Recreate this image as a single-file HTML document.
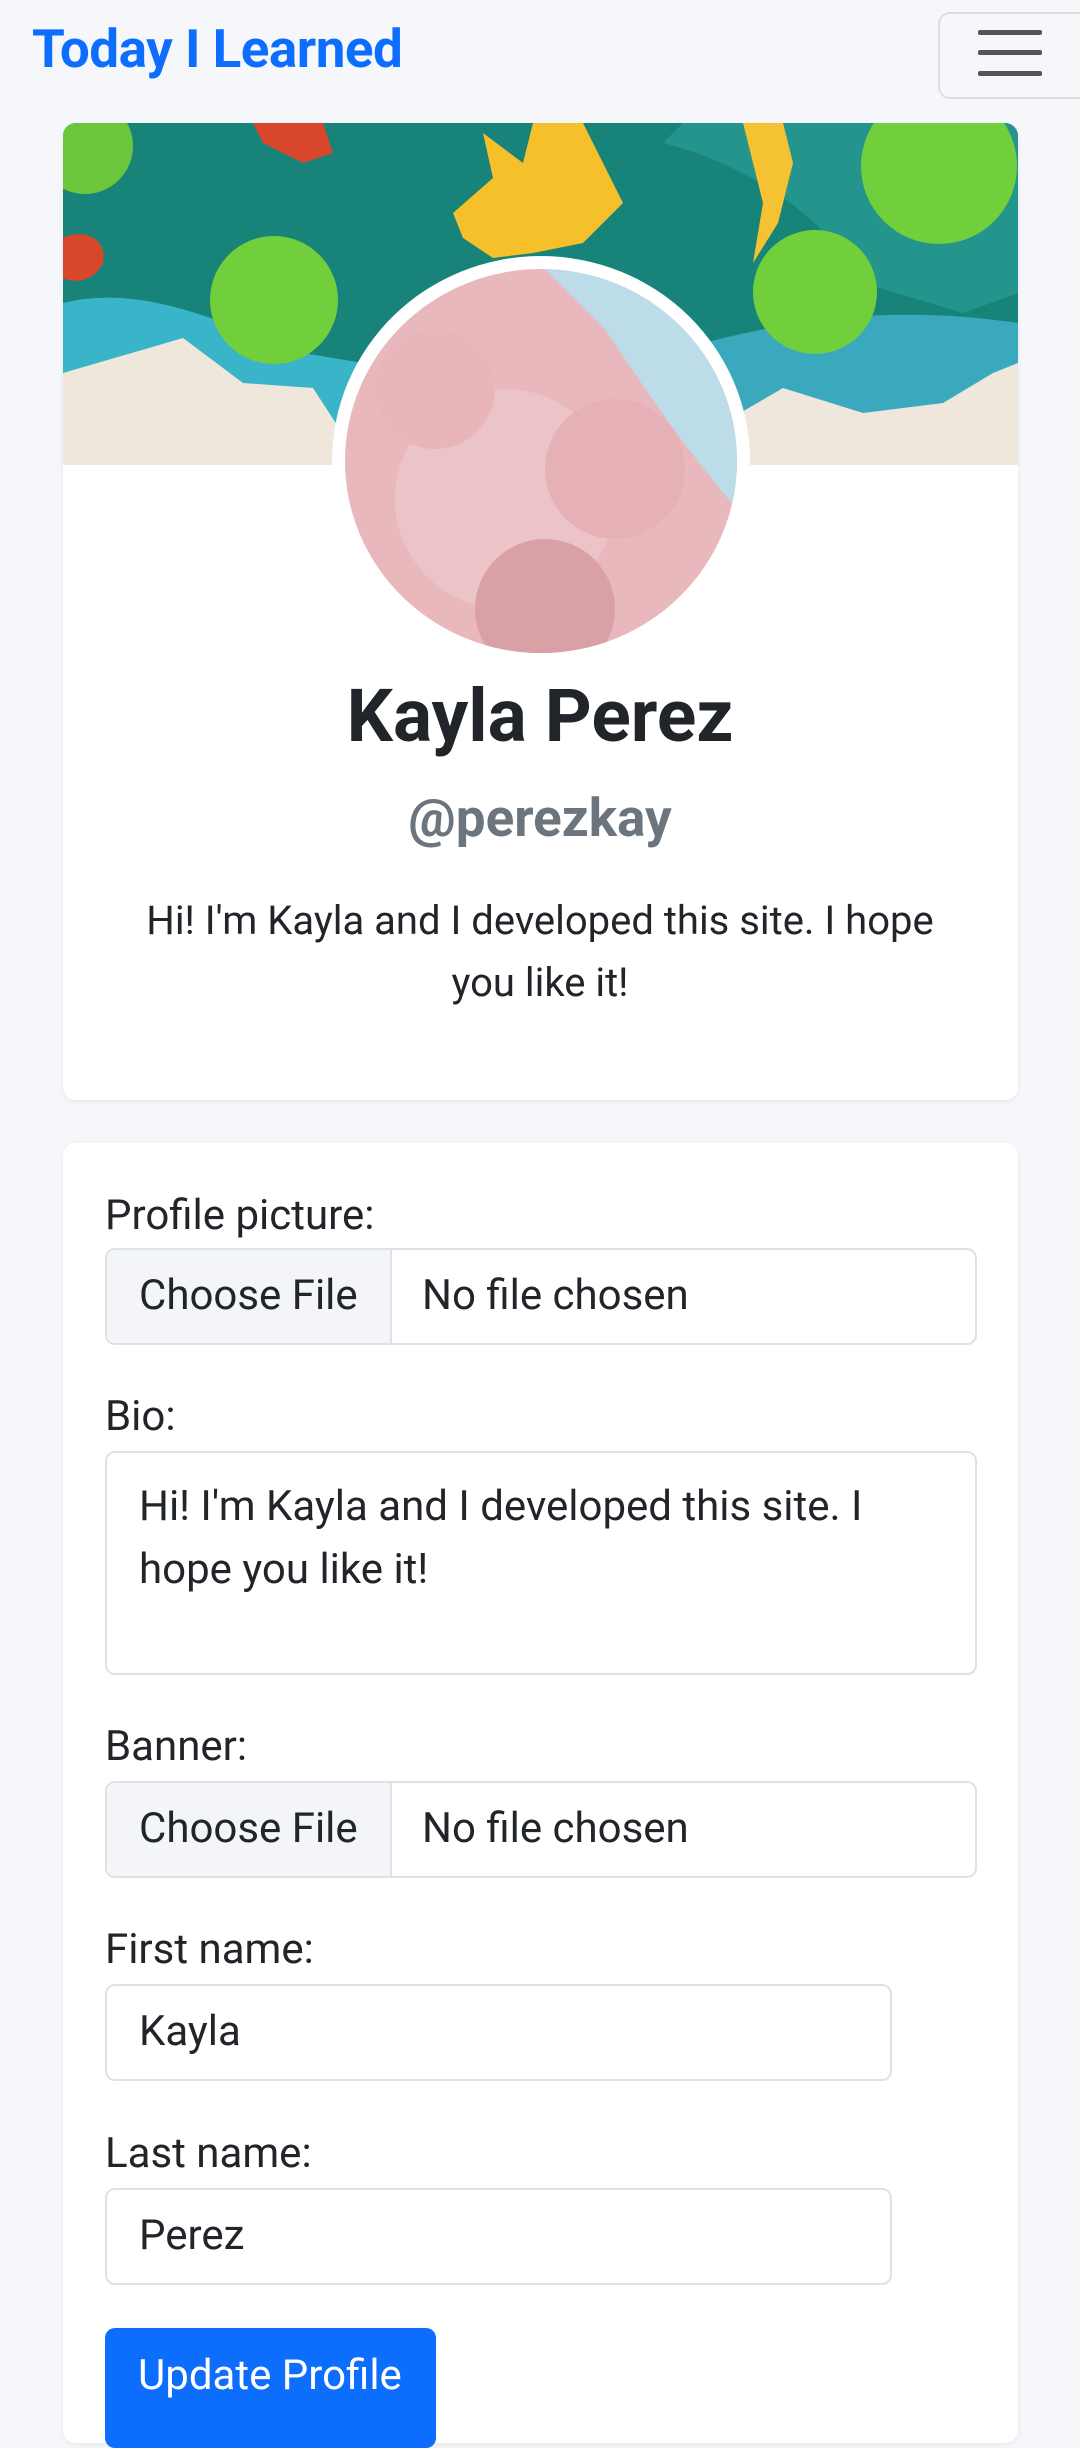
<!DOCTYPE html>
<html><head><meta charset="utf-8">
<style>
*{box-sizing:border-box;margin:0;padding:0}
body{width:1080px;height:2416px;overflow:hidden;background:#f5f7fa;font-family:"Roboto","Liberation Sans",sans-serif;color:#212529;position:relative}
.brand{position:absolute;left:32px;top:18px;font-size:53px;font-weight:bold;color:#0d6efd;letter-spacing:-0.5px}
.tog{position:absolute;left:938px;top:12px;width:160px;height:87px;border:2px solid #dcdde0;border-radius:12px}
.tog i{position:absolute;left:38px;width:64px;height:5px;background:#555;border-radius:2px}
.card{position:absolute;left:63px;width:955px;background:#fff;border-radius:13px;box-shadow:0 2px 6px rgba(0,0,0,.06)}
.ban{position:absolute;left:63px;top:123px;width:955px;height:342px;border-radius:13px 13px 0 0;overflow:hidden}
.av{position:absolute;left:332px;top:256px;width:418px;height:410px;border-radius:50%;background:#fff;overflow:hidden}
.avi{position:absolute;left:13px;top:13px;width:392px;height:384px;border-radius:50%;overflow:hidden}
.name{position:absolute;left:0;width:1080px;text-align:center}
.lbl{position:absolute;left:105px;font-size:42px;line-height:46px}
.inp{position:absolute;left:105px;border:2px solid #dee2e6;border-radius:10px;background:#fff;font-size:42px;line-height:46px}
.fb{position:absolute;left:0;top:0;bottom:0;width:285px;background:#f3f5f8;border-right:2px solid #dee2e6;border-radius:10px 0 0 10px}
</style></head><body>
<div class="brand">Today I Learned</div>
<div class="tog"><i style="top:16px"></i><i style="top:36px"></i><i style="top:57px"></i></div>

<div class="card" style="top:123px;height:977px"></div>
<div class="ban">
<svg width="955" height="342" viewBox="0 0 955 342">
<rect width="955" height="342" fill="#178379"/>
<path d="M0 180 C80 160 160 200 240 230 L420 260 L420 342 L0 342Z" fill="#3ab4c8"/>
<path d="M640 220 C720 200 820 180 955 200 L955 342 L640 342Z" fill="#3aa9be"/>
<path d="M600 20 C680 40 760 90 800 160 L900 190 L955 170 L955 0 L620 0Z" fill="#2a9d96" opacity=".7"/>
<path d="M0 250 L120 215 L180 260 L250 265 L300 342 L0 342Z" fill="#efe6dc"/>
<path d="M660 300 L720 265 L800 290 L880 280 L930 250 L955 240 L955 342 L660 342Z" fill="#efe6dc"/>
<circle cx="211" cy="177" r="64" fill="#72cf3c"/>
<circle cx="752" cy="169" r="62" fill="#72cf3c"/>
<circle cx="876" cy="43" r="78" fill="#72cf3c"/>
<circle cx="22" cy="23" r="48" fill="#6cc63b"/>
<path d="M390 90 L430 55 L420 10 L460 40 L470 0 L520 0 L540 40 L560 80 L520 120 L470 130 L430 135 L400 115Z" fill="#f6c02a"/>
<path d="M680 0 L720 0 L730 40 L715 100 L690 140 L700 80Z" fill="#f4c233"/>
<path d="M190 0 L260 0 L270 30 L240 40 L200 20Z" fill="#d8472b"/>
<path d="M0 115 C20 105 45 115 40 140 C30 160 10 160 0 155Z" fill="#d8472b"/>
</svg></div>
<div class="av"><div class="avi">
<svg width="392" height="384"><rect width="392" height="384" fill="#e9b8bd"/>
<path d="M200 0 L392 0 L392 240 C340 180 300 120 260 60Z" fill="#bcdcea"/>
<circle cx="160" cy="230" r="110" fill="#ecc3c6"/>
<circle cx="270" cy="200" r="70" fill="#e6b1b6"/>
<circle cx="90" cy="120" r="60" fill="#e8b6ba"/>
<circle cx="200" cy="340" r="70" fill="#d9a0a6"/>
</svg></div></div>
<div class="name" style="top:674px;font-size:73px;font-weight:bold;line-height:84px">Kayla Perez</div>
<div class="name" style="top:788px;font-size:53px;font-weight:bold;color:#6c757d;line-height:60px">@perezkay</div>
<div class="name" style="top:890px;font-size:40px;line-height:62px;padding:0 125px">Hi! I'm Kayla and I developed this site. I hope you like it!</div>

<div class="card" style="top:1143px;height:1300px"></div>
<div class="lbl" style="top:1193px">Profile picture:</div>
<div class="inp" style="top:1248px;width:872px;height:97px"><div class="fb"></div><span style="position:absolute;left:32px;top:23px">Choose File</span><span style="position:absolute;left:315px;top:23px">No file chosen</span></div>
<div class="lbl" style="top:1394px">Bio:</div>
<div class="inp" style="top:1451px;width:872px;height:224px;padding:22px 32px;line-height:63px">Hi! I'm Kayla and I developed this site. I hope you like it!</div>
<div class="lbl" style="top:1724px">Banner:</div>
<div class="inp" style="top:1781px;width:872px;height:97px"><div class="fb"></div><span style="position:absolute;left:32px;top:23px">Choose File</span><span style="position:absolute;left:315px;top:23px">No file chosen</span></div>
<div class="lbl" style="top:1927px">First name:</div>
<div class="inp" style="top:1984px;width:787px;height:97px;padding:23px 32px">Kayla</div>
<div class="lbl" style="top:2131px">Last name:</div>
<div class="inp" style="top:2188px;width:787px;height:97px;padding:23px 32px">Perez</div>
<div style="position:absolute;left:105px;top:2328px;width:331px;height:120px;background:#0d6efd;border-radius:10px;color:#fff;font-size:42px;line-height:46px;padding:25px 0 0 33px">Update Profile</div>
</body></html>
